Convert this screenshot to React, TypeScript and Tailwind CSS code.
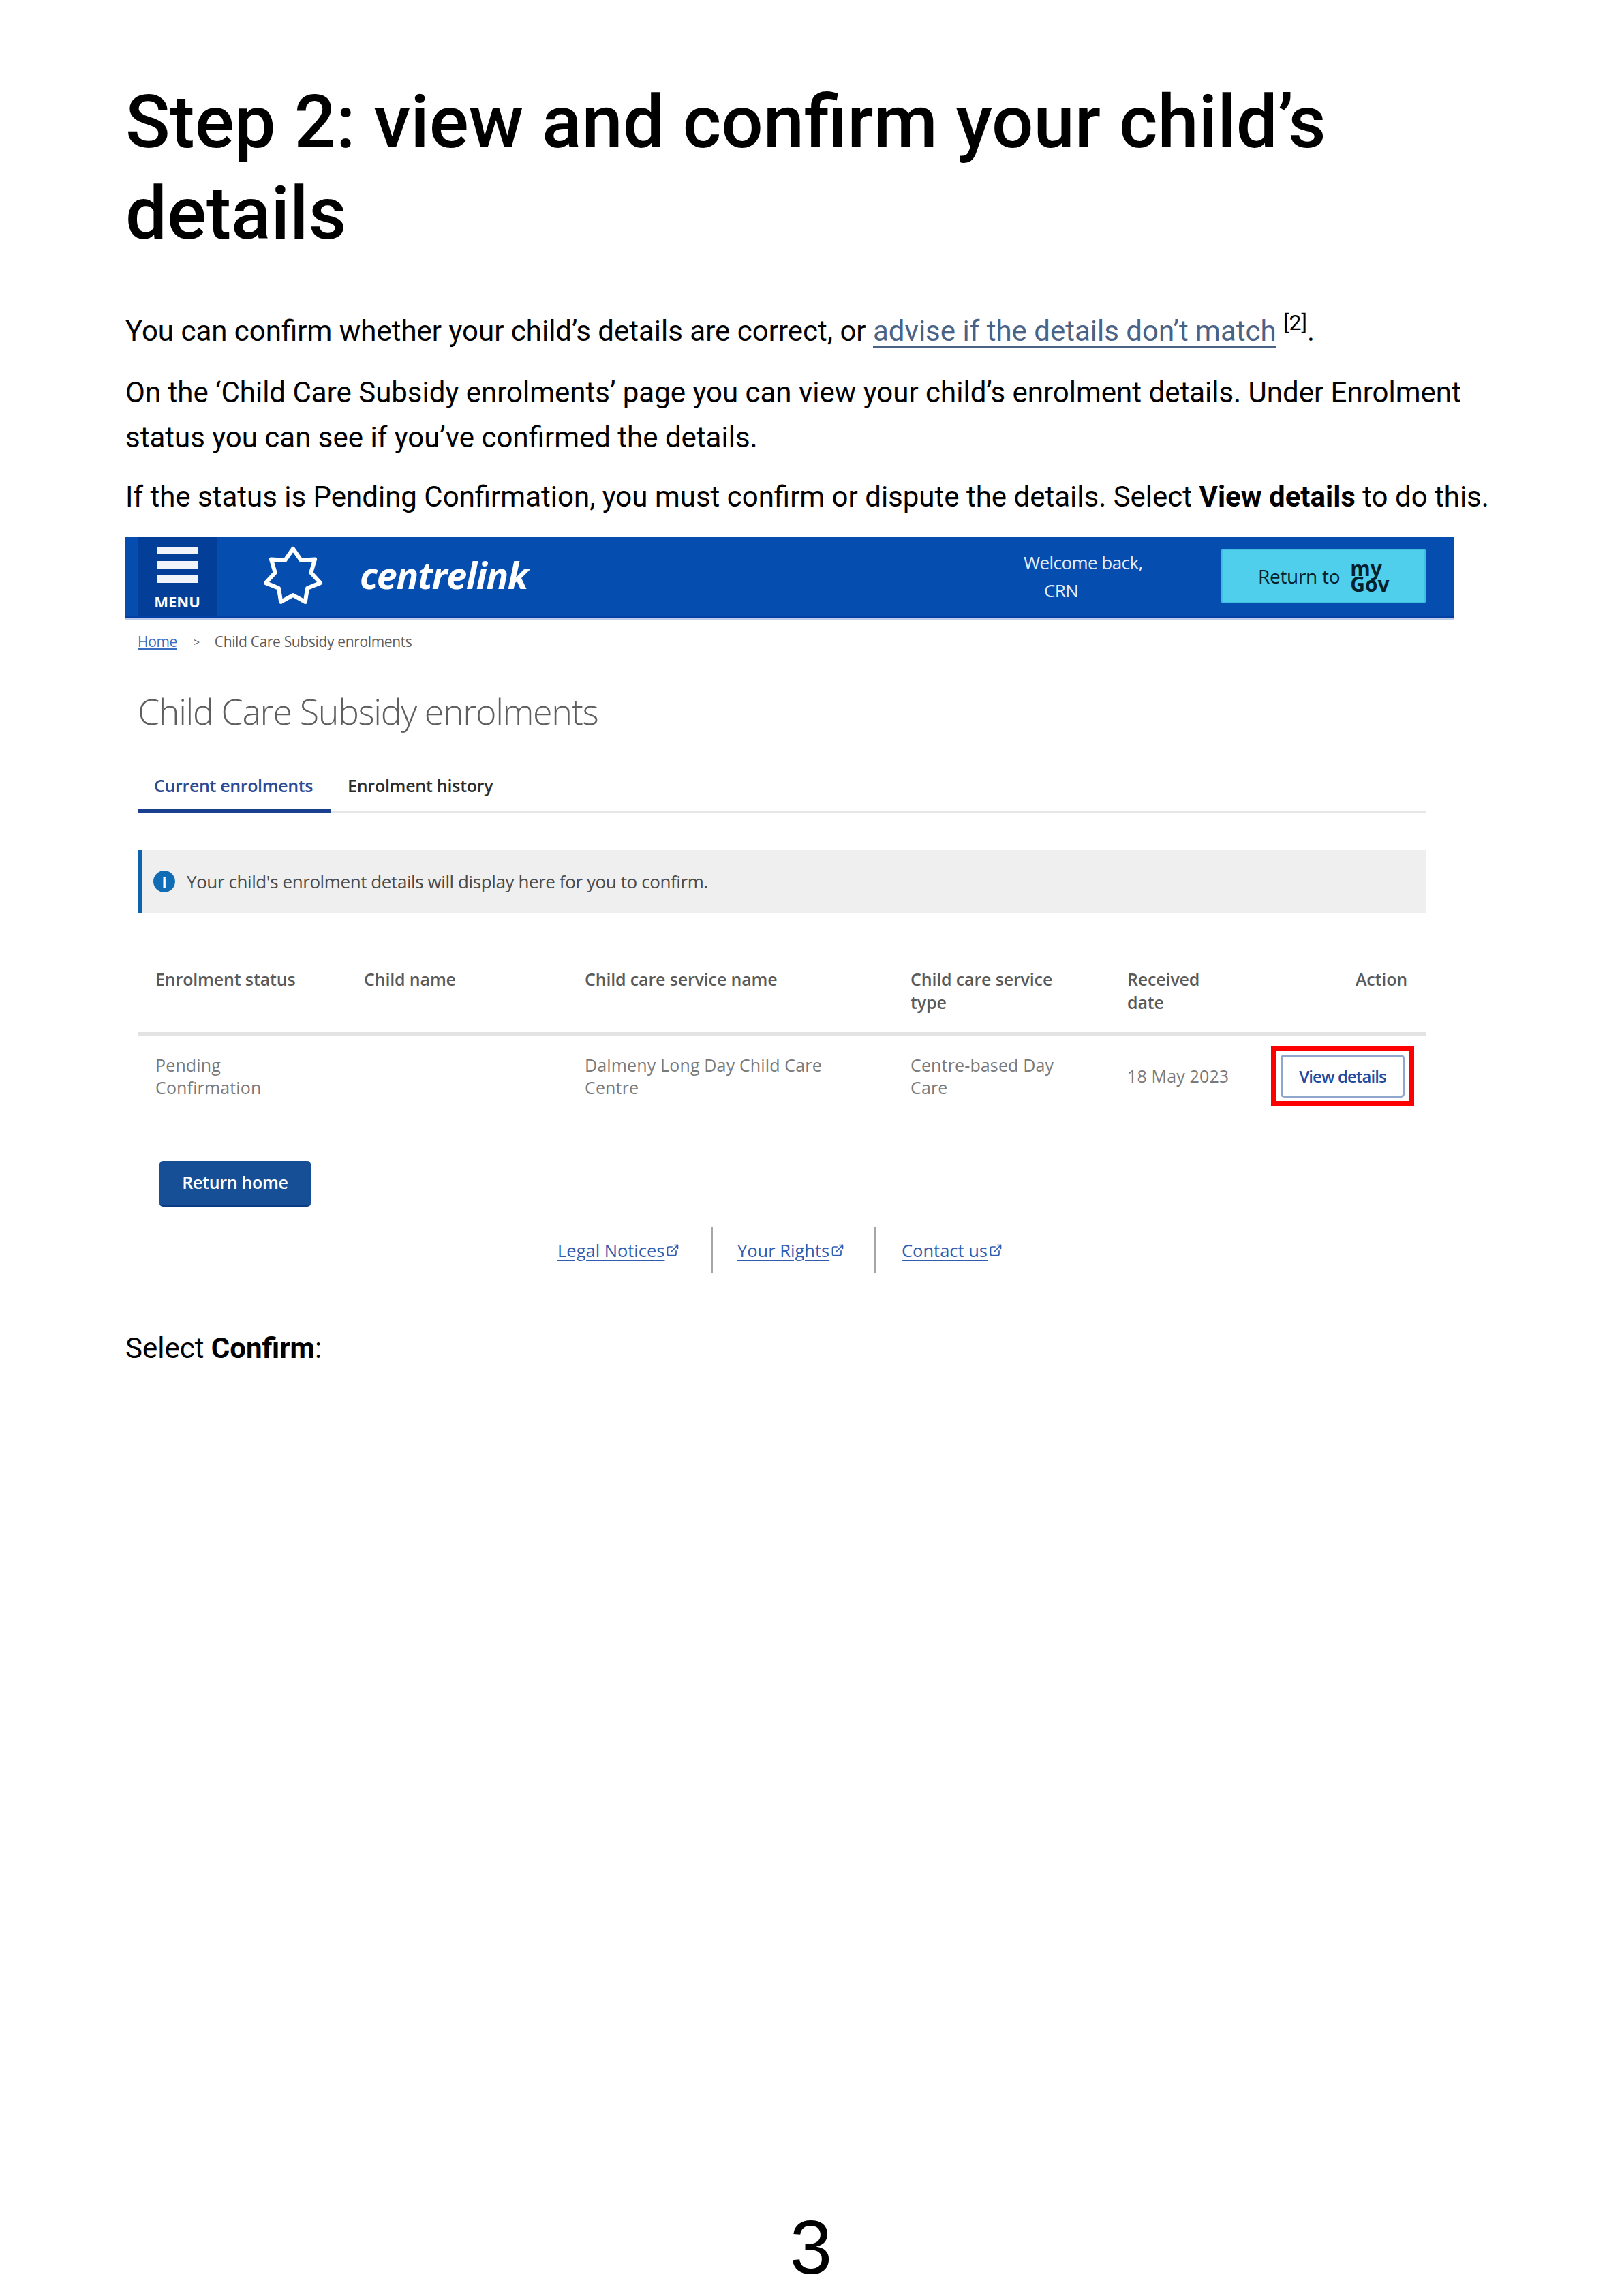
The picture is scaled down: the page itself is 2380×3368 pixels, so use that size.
import { ExternalLink } from "lucide-react";

// Commonwealth star outline, seven points
const starPoints = Array.from({ length: 14 }, (_, i) => {
  const radius = i % 2 === 0 ? 41 : 27;
  const angle = (i * Math.PI) / 7 - Math.PI / 2;
  return `${(46 + radius * Math.cos(angle)).toFixed(1)},${(46 + radius * Math.sin(angle)).toFixed(1)}`;
}).join(" ");

function FooterLink({ label, width }: { label: string; width: string }) {
  return (
    <a className={`flex items-center gap-[2px] text-[25.5px] text-[#2f5cb0] underline underline-offset-4 ${width}`}>
      {label}
      <ExternalLink className="w-[20px] h-[20px] shrink-0" strokeWidth={2} />
    </a>
  );
}

function Header() {
  return (
    <div className="h-[123px] border-b-[3px] border-[#c0cde8]">
      <div className="h-[120px] bg-[#054eb0] border-b-[3px] border-[#033fa5] flex items-stretch">
        <div className="w-[116px] ml-[18px] bg-[#033f98] flex flex-col items-center pt-[15px]">
          <div className="w-[60px] h-[11px] bg-[#f1f4fa]"></div>
          <div className="w-[60px] h-[11px] bg-[#f1f4fa] mt-[10px]"></div>
          <div className="w-[60px] h-[11px] bg-[#f1f4fa] mt-[10px]"></div>
          <span className="text-[22px] leading-[26px] font-bold text-white mt-[14px] font-['Open_Sans']">MENU</span>
        </div>
        <svg viewBox="0 0 92 92" className="w-[92px] h-[92px] ml-[66px] mt-[13px]">
          <polygon points={starPoints} fill="none" stroke="#ffffff" strokeWidth="6" strokeLinejoin="round" />
        </svg>
        <span className="ml-[52px] mt-[24px] text-[54px] leading-[64px] font-bold italic tracking-[-1.3px] text-white font-['Open_Sans']">
          centrelink
        </span>
        <div className="ml-auto w-[180px] mr-[110px] pt-[18px] text-[26px] leading-[41px] tracking-[-0.55px] whitespace-nowrap text-[#e6ecf8] font-['Open_Sans']">
          <p>Welcome back,</p>
          <p className="pl-[30px]">CRN</p>
        </div>
        <div className="w-[300px] h-[80px] mt-[18px] mr-[42px] bg-[#4fcfec] border-2 border-[#3fbfe2] rounded-[3px] flex items-center pl-[52px] gap-[15px] font-['Open_Sans'] text-[#04202c]">
          <span className="text-[28px] tracking-[-0.3px]">Return to</span>
          <span className="text-[30px] leading-[23px] font-bold">
            my
            <br />
            Gov
          </span>
        </div>
      </div>
    </div>
  );
}

function EnrolmentsShot() {
  return (
    <div className="w-[1950px] mt-[25px] font-['Open_Sans']">
      <Header />
      <div className="pl-[18px] pr-[42px]">
        {/* breadcrumb */}
        <div className="flex items-center mt-[20px] h-[24px] text-[21px] tracking-[-0.35px] text-[#5c5c5c]">
          <a className="text-[#3a6cc0] underline">Home</a>
          <span className="ml-[24px] mr-[22px] text-[16px]">&gt;</span>
          <span>Child Care Subsidy enrolments</span>
        </div>

        <h2 className="mt-[54px] text-[52px] leading-[70px] font-light tracking-[-1.4px] text-[#5f5f5f]">
          Child Care Subsidy enrolments
        </h2>

        {/* tabs */}
        <div className="mt-[48px] flex border-b-[3px] border-[#e6e6e6] h-[67px]">
          <div className="w-[284px] h-[67px] border-b-[6px] border-[#1a3f8f] pl-[24px] pt-[9px] text-[25px] leading-[34px] font-semibold tracking-[-0.35px] text-[#2b4a94]">
            Current enrolments
          </div>
          <div className="pl-[24px] pt-[9px] text-[25px] leading-[34px] font-semibold tracking-[-0.25px] text-[#2d2d2d]">
            Enrolment history
          </div>
        </div>

        {/* info banner */}
        <div className="mt-[54px] h-[92px] bg-[#efefef] border-l-[7px] border-[#0f62ad] flex items-center pl-[16px]">
          <span className="w-[32px] h-[32px] rounded-full bg-[#0f6cb5] text-white text-[22px] font-bold flex items-center justify-center">
            i
          </span>
          <span className="ml-[17px] text-[26px] tracking-[-0.41px] text-[#4a4a4a]">
            Your child's enrolment details will display here for you to confirm.
          </span>
        </div>

        {/* table */}
        <div className="mt-[80px] grid grid-cols-[306px_324px_478px_318px_1fr] pl-[26px] pr-[27px] pb-[27px] border-b-[5px] border-[#e3e3e3] text-[25px] leading-[34px] font-semibold tracking-[-0.15px] text-[#5a5a5a]">
          <div>Enrolment status</div>
          <div>Child name</div>
          <div>Child care service name</div>
          <div>
            Child care service
            <br />
            type
          </div>
          <div className="flex justify-between">
            <span>
              Received
              <br />
              date
            </span>
            <span>Action</span>
          </div>
        </div>
        <div className="grid grid-cols-[306px_324px_478px_318px_1fr] items-center pl-[26px] pr-[17px] h-[119px] text-[25px] leading-[33px] tracking-[0.15px] text-[#7a7a7a]">
          <div>
            Pending
            <br />
            Confirmation
          </div>
          <div></div>
          <div>
            Dalmeny Long Day Child Care
            <br />
            Centre
          </div>
          <div>
            Centre-based Day
            <br />
            Care
          </div>
          <div className="flex items-center justify-between">
            <span>18 May 2023</span>
            <div className="w-[210px] h-[87px] border-[7px] border-[#ff0000] bg-white flex items-center justify-center">
              <button className="w-[182px] h-[63px] border-[3px] border-[#8fa6cd] rounded-[5px] text-[24px] font-semibold tracking-[-0.9px] text-[#234a9c]">
                View details
              </button>
            </div>
          </div>
        </div>

        <button className="mt-[65px] ml-[32px] w-[222px] h-[67px] bg-[#174f96] border-b-[3px] border-[#0c3b86] rounded-[5px] text-[25px] font-semibold tracking-[-0.3px] text-white block">
          Return home
        </button>

        {/* footer links */}
        <div className="mt-[30px] ml-[616px] flex items-center h-[68px] text-[#2f5cb0]">
          <FooterLink label="Legal Notices" width="w-[182px]" />
          <div className="w-[3px] h-[68px] bg-[#a6a6a6] ml-[43px] mr-[36px]"></div>
          <FooterLink label="Your Rights" width="w-[158px]" />
          <div className="w-[3px] h-[68px] bg-[#a6a6a6] ml-[43px] mr-[37px]"></div>
          <FooterLink label="Contact us" width="w-[150px]" />
        </div>
      </div>
    </div>
  );
}

export default function App() {
  return (
    <div className="h-[3368px] bg-white flex flex-col px-[184px] font-[Roboto] text-black">
      <h1 className="pt-[112px] text-[108.3px] leading-[134px] font-medium">
        Step 2: view and confirm your child’s
        <br />
        details
      </h1>
      <p className="mt-[72px] text-[42px] leading-[67px]">
        You can confirm whether your child’s details are correct, or{" "}
        <a className="text-[#4a6285] underline decoration-[3px] underline-offset-[8px]">advise if the details don’t match</a>{" "}
        <sup className="text-[32px]">[2]</sup>.
      </p>
      <p className="mt-[24px] text-[42px] leading-[66px] whitespace-nowrap">
        On the ‘Child Care Subsidy enrolments’ page you can view your child’s enrolment details. Under Enrolment
        <br />
        status you can see if you’ve confirmed the details.
      </p>
      <p className="mt-[20px] text-[42px] leading-[67px] whitespace-nowrap">
        If the status is Pending Confirmation, you must confirm or dispute the details. Select <b className="font-bold">View details</b> to do this.
      </p>
      <EnrolmentsShot />
      <p className="mt-[76px] text-[42px] leading-[67px]">
        Select <b className="font-bold">Confirm</b>:
      </p>
      <div className="mt-auto pb-[11px] text-center text-[112px] leading-[120px] font-['Liberation_Sans']">3</div>
    </div>
  );
}
